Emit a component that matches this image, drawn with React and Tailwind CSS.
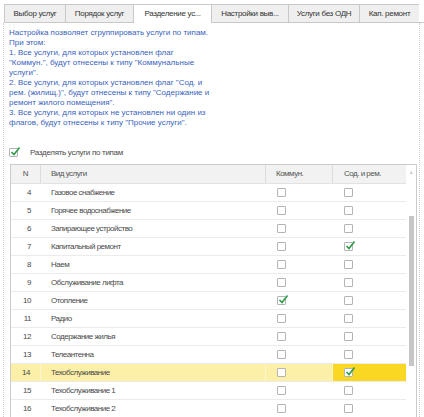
import React from "react";

const TABS = [
  { label: "Выбор услуг", w: "w-[61px]" },
  { label: "Порядок услуг", w: "w-[68px]" },
  { label: "Разделение ус...", w: "w-[78px]", active: true },
  { label: "Настройки выв...", w: "w-[77px]" },
  { label: "Услуги без ОДН", w: "w-[71px]" },
  { label: "Кап. ремонт", w: "w-[60px]" },
];

const ROWS = [
  { n: 4, name: "Газовое снабжение" },
  { n: 5, name: "Горячее водоснабжение" },
  { n: 6, name: "Запирающее устройство" },
  { n: 7, name: "Капитальный ремонт", sod: true },
  { n: 8, name: "Наем" },
  { n: 9, name: "Обслуживание лифта" },
  { n: 10, name: "Отопление", komm: true },
  { n: 11, name: "Радио" },
  { n: 12, name: "Содержание жилья" },
  { n: 13, name: "Телеантенна" },
  { n: 14, name: "Техобслуживание", sod: true, current: true },
  { n: 15, name: "Техобслуживание 1" },
  { n: 16, name: "Техобслуживание 2" },
];

// ─── small checkbox, 1C style ───
function Check({ checked }) {
  return (
    <div className="relative w-[9px] h-[9px] border border-[#b4b4b4] rounded-[1px] bg-white shrink-0">
      {checked && (
        <svg width="11" height="11" viewBox="0 0 11 11" className="absolute -top-[3px] left-0 overflow-visible">
          <path d="M1.5 6 L4 8.5 L9.5 1.5" fill="none" stroke="#2f9a48" strokeWidth="1.6" />
        </svg>
      )}
    </div>
  );
}

export default function App() {
  return (
    <div className="w-[424px] h-[417px] overflow-hidden bg-white font-['Liberation_Sans',Arial,sans-serif] text-[8px] tracking-[-0.5px] text-[#4a4a4a]">
      {/* Tabs */}
      <div className="flex pl-[4px] pt-[4px] tracking-[-0.3px] text-[#333]">
        {TABS.map(t => (
          <div
            key={t.label}
            className={`${t.w} h-[19px] flex items-center justify-center border-t border-l border-[#c8c8c8] last:border-r whitespace-nowrap ${
              t.active ? "bg-white" : "bg-[#efefef] border-b"
            }`}
          >
            {t.label}
          </div>
        ))}
        <div className="flex-1 border-b border-[#c8c8c8]" />
      </div>

      {/* Panel */}
      <div className="ml-[3px] mr-[4px] h-[394px] border-l border-dotted border-r border-r-solid border-[#cdcdcd] pl-[5px] pt-[5px] overflow-hidden">
        <div className="leading-[10px] tracking-normal text-[#3a5fbd]">
          Настройка позволяет сгруппировать услуги по типам.<br />
          При этом:<br />
          1. Все услуги, для которых установлен флаг<br />
          "Коммун.", будут отнесены к типу "Коммунальные<br />
          услуги".<br />
          2. Все услуги, для которых установлен флаг "Сод. и<br />
          рем. (жилищ.)", будут отнесены к типу "Содержание и<br />
          ремонт жилого помещения".<br />
          3. Все услуги, для которых не установлен ни один из<br />
          флагов, будут отнесены к типу "Прочие услуги".
        </div>

        <div className="mt-[20px] flex items-center h-[9px]">
          <Check checked />
          <span className="ml-[12px] tracking-[-0.3px]">Разделять услуги по типам</span>
        </div>

        {/* Table */}
        <div className="mt-[7px] ml-[1px] w-[407px] flex border border-[#cbcbcb]">
          <div className="w-[396px]">
            <div className="flex h-[19px] bg-[#f2f2f2] border-b border-[#e2e2e2] text-[#555]">
              <div className="w-[30px] flex items-center justify-center border-r border-[#dcdcdc]">N</div>
              <div className="w-[225px] flex items-center pl-[10px] border-r border-[#dcdcdc]">Вид услуги</div>
              <div className="w-[67px] flex items-center pl-[10px] border-r border-[#dcdcdc]">Коммун.</div>
              <div className="flex-1 flex items-center pl-[11px]">Сод. и рем.</div>
            </div>
            {ROWS.map(r => (
              <div
                key={r.n}
                className={`flex h-[18px] border-b border-[#ebebeb] ${r.current ? "bg-[#fcefa8]" : ""}`}
              >
                <div className={`w-[30px] flex items-center justify-end pr-[10px] ${r.current ? "border-r border-[#fff6cf]" : ""}`}>{r.n}</div>
                <div className={`w-[225px] flex items-center pl-[10px] ${r.current ? "border-r border-[#fff6cf]" : ""}`}>{r.name}</div>
                <div className={`w-[67px] flex items-center pl-[11px] ${r.current ? "border-r border-[#fff6cf]" : ""}`}>
                  <Check checked={r.komm} />
                </div>
                <div className={`flex-1 flex items-center pl-[11px] ${r.current ? "bg-[#fad722]" : ""}`}>
                  <Check checked={r.sod} />
                </div>
              </div>
            ))}
          </div>
          {/* Scrollbar */}
          <div className="w-[10px] flex flex-col items-center">
            <div className="mt-[5px] text-[5px] leading-[5px] text-[#c8c8c8]">▲</div>
            <div className="mt-[41px] w-[5px] h-[150px] bg-[#c6c6c6]" />
          </div>
        </div>
      </div>
    </div>
  );
}
